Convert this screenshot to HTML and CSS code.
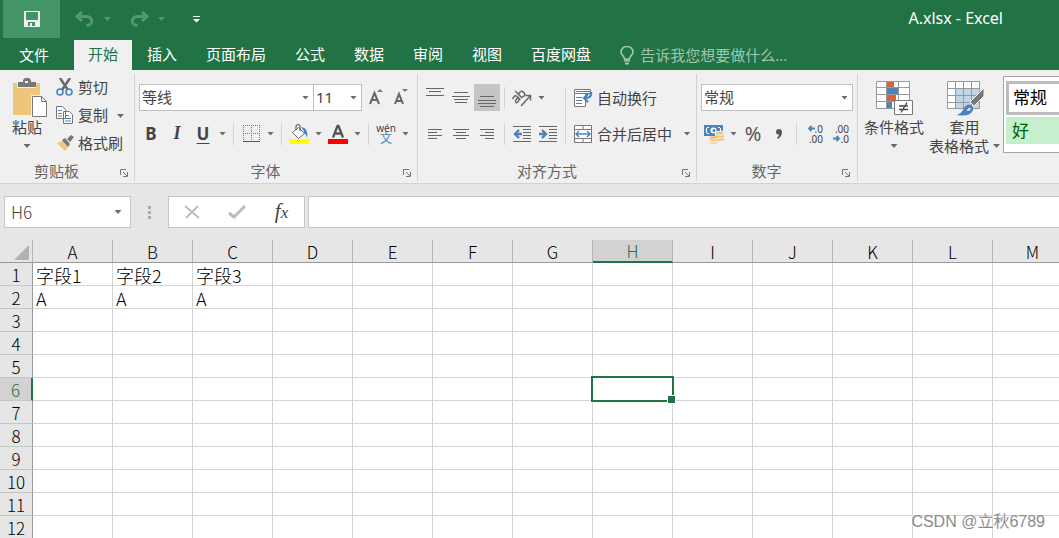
FILE: index.html
```html
<!DOCTYPE html>
<html lang="zh-CN">
<head>
<meta charset="utf-8">
<meta name="viewport" content="width=device-width, initial-scale=1">
<title>A.xlsx - Excel</title>
<link rel="stylesheet" href="styles.css">
</head>
<body>
<header class="titlebar">
  <div class="quick">
    <button class="save" aria-label="保存"><svg width="16" height="16" viewBox="0 0 16 16"><path fill="#f0f0f0" fill-rule="evenodd" d="M0 0h16v16H0zM2 1v8h12V1zM4 11v4h2v-3h2v3h3v-4z"/></svg></button>
    <button class="undo" aria-label="撤消"><svg width="20" height="16" viewBox="0 0 20 16"><path d="M7 1 2 5.500 7 10M2.500 5.500h9c7 0 7 9 0 9" fill="none" stroke="#559673" stroke-width="3"/></svg></button>
    <button class="drop faded" aria-label="撤消列表"><i class="arrow"></i></button>
    <button class="redo" aria-label="恢复"><svg width="20" height="16" viewBox="0 0 20 16"><path d="m13 1 5 4.500L13 10M17.500 5.500h-9c-7 0-7 9 0 9" fill="none" stroke="#559673" stroke-width="3"/></svg></button>
    <button class="drop faded" aria-label="恢复列表"><i class="arrow"></i></button>
    <button class="customize" aria-label="自定义快速访问工具栏"><svg width="7" height="7" viewBox="0 0 7 7"><path fill="#fff" d="M0 0h7v1H0zM0 3h7L3.500 6.500z"/></svg></button>
  </div>
  <h1 class="doc-title">A.xlsx - Excel</h1>
</header>
<nav class="tabs">
  <button class="tab file">文件</button>
  <button class="tab active">开始</button>
  <button class="tab">插入</button>
  <button class="tab">页面布局</button>
  <button class="tab">公式</button>
  <button class="tab">数据</button>
  <button class="tab">审阅</button>
  <button class="tab">视图</button>
  <button class="tab">百度网盘</button>
  <button class="tell"><svg width="14" height="19" viewBox="0 0 14 19"><path d="M4.500 13c0-3-3.500-4-3.500-7a6 5.500 0 0 1 12 0c0 3-3.500 4-3.500 7z" fill="none" stroke="#a0c6b0" stroke-width="1.600"/><path d="M4 14.500h6M5 17.500h4" stroke="#a0c6b0" stroke-width="2"/></svg><span>告诉我您想要做什么...</span></button>
</nav>

<main class="ribbon">
  <section class="group clipboard">
    <div class="body">
      <button class="big paste">
        <svg width="36" height="40" viewBox="0 0 36 40"><path fill="#edc57b" d="M1 5h27v32H1z"/><path fill="#f0f0f0" d="M5 4h19v6H5z"/><path fill="#777" fill-rule="evenodd" d="M6 4h5V2l2-2h4l2 2v2h5v5H6zM13 3v2h3V3z"/><path fill="#f0f0f0" d="M19 17h17v22H19z"/><path d="M20.500 18.500h9l5 5v15h-14zM29.500 18.500v5h5" fill="#fff" stroke="#777"/></svg>
        <span>粘贴</span><i class="arrow"></i>
      </button>
      <div class="stack">
        <button class="tool"><svg width="18" height="18" viewBox="0 0 18 18"><path d="m4 0 8 12M14 0 6 12" stroke="#6a6a6a" stroke-width="2.500"/><g fill="none" stroke="#4a83bd" stroke-width="1.600"><circle cx="4" cy="14" r="3"/><circle cx="13" cy="14" r="3"/></g></svg><span>剪切</span></button>
        <div class="split"><button class="tool"><svg width="18" height="18" viewBox="0 0 18 18"><path d="M.5.5h6l3 3v9h-9zM7.500 5.500h6l3 3v9h-9z" fill="#fff" stroke="#777"/><path d="M2 4.500h4M2 7.500h4M2 10h4M9 9.500h4M9 12.500h6M9 15h6" stroke="#4a83bd"/></svg><span>复制</span></button><button class="drop" aria-label="复制选项"><i class="arrow"></i></button></div>
        <button class="tool"><svg width="18" height="18" viewBox="0 0 18 18"><path fill="#edc57b" d="m1 9 6-2 5 6-3 4z"/><path fill="#777" d="m6 6 3-2 5 6-2 3zM11 5l4-4 3 2-4 5z"/></svg><span>格式刷</span></button>
      </div>
    </div>
    <div class="foot"><h2>剪贴板</h2><button class="launch" aria-label="剪贴板设置"><svg width="8" height="8" viewBox="0 0 8 8"><path d="M.5 6V.5H6M3 3l4 4M7.500 3v4.500H3" fill="none" stroke="#777"/></svg></button></div>
  </section>

  <section class="group font">
    <div class="body rows">
      <div class="row fields">
        <label class="combo grow"><select aria-label="字体"><option>等线</option></select><i class="arrow"></i></label><label class="combo size"><select aria-label="字号"><option>11</option></select><i class="arrow"></i></label>
        <button class="ic" aria-label="增大字号"><svg width="18" height="20" viewBox="0 0 18 20"><path d="M4 16 8.500 5 13 16M5.500 12h6" fill="none" stroke="#666" stroke-width="2"/><path fill="#4a83bd" d="M11 4h6l-3-3z"/></svg></button>
        <button class="ic" aria-label="减小字号"><svg width="18" height="20" viewBox="0 0 18 20"><path d="M3 16 7 6l4 10M4.500 13h5" fill="none" stroke="#666" stroke-width="2"/><path fill="#4a83bd" d="M10 1h6l-3 3z"/></svg></button>
      </div>
      <div class="row">
        <button class="ic bold">B</button><button class="ic italic">I</button><button class="ic under">U</button><button class="drop" aria-label="下划线选项"><i class="arrow"></i></button>
        <i class="sep"></i>
        <button class="ic" aria-label="边框"><svg width="17" height="17" viewBox="0 0 17 17"><path d="M0 .5h17M.5 0v16M16.500 0v16M8.500 0v16M0 8.500h17" stroke="#777" stroke-dasharray="1 1"/><path d="M0 16.500h17" stroke="#555"/></svg></button><button class="drop" aria-label="边框选项"><i class="arrow"></i></button>
        <i class="sep"></i>
        <button class="ic" aria-label="填充颜色"><svg width="20" height="20" viewBox="0 0 20 20"><path d="m3.500 8.500 6-5 6 6-6 5z" fill="#fff" stroke="#666"/><path d="M7 6V2q2-3 4 0v5" fill="none" stroke="#666" stroke-width="1.200"/><path fill="#4a83bd" d="M12 3q8 1 6 11-1-5-4-5l1-2z"/><path fill="#ff0" d="M0 15h20v5H0z"/></svg></button><button class="drop" aria-label="填充颜色选项"><i class="arrow"></i></button>
        <button class="ic" aria-label="字体颜色"><svg width="20" height="20" viewBox="0 0 20 20"><path d="M5 13.500 9.500 2h1L15 13.500M6.500 9.500h7" fill="none" stroke="#555" stroke-width="2.300"/><path fill="red" d="M0 15h20v5H0z"/></svg></button><button class="drop" aria-label="字体颜色选项"><i class="arrow"></i></button>
        <i class="sep"></i>
        <button class="ic pinyin"><span>wén</span><b>文</b></button><button class="drop" aria-label="拼音选项"><i class="arrow"></i></button>
      </div>
    </div>
    <div class="foot"><h2>字体</h2><button class="launch" aria-label="字体设置"><svg width="8" height="8" viewBox="0 0 8 8"><path d="M.5 6V.5H6M3 3l4 4M7.500 3v4.500H3" fill="none" stroke="#777"/></svg></button></div>
  </section>

  <section class="group align">
    <div class="body">
      <div class="rows">
        <div class="row">
          <button class="ic" aria-label="顶端对齐"><svg width="18" height="20" viewBox="0 0 18 20"><path d="M0 .5h18M3 3.500h12M0 7.500h18" stroke="#666"/></svg></button><button class="ic" aria-label="垂直居中"><svg width="18" height="20" viewBox="0 0 18 20"><path d="M2 4.500h14M0 8.500h18M2 11.500h14M3 14.500h12" stroke="#666"/></svg></button><button class="ic on" aria-label="底端对齐"><svg width="18" height="20" viewBox="0 0 18 20"><path d="M2 8.500h14M0 12.500h18M0 15.500h18M2 18.500h14" stroke="#666"/></svg></button>
          <i class="sep"></i>
          <button class="ic" aria-label="方向"><svg width="20" height="20" viewBox="0 0 20 20"><g fill="none" stroke="#666" stroke-width="1.500"><g transform="rotate(-45 7 9)"><path d="M1 6q5-2 5 1v5M6 8.500q-5 0-5 2 0 2.500 5 0M8.500 2v10M8.500 7q5-2.500 5 2t-5 2"/></g><path d="M9 18 18 8M13.500 7.500H18.500V12.500"/></g></svg></button><button class="drop" aria-label="方向选项"><i class="arrow"></i></button>
        </div>
        <div class="row">
          <button class="ic" aria-label="左对齐"><svg width="16" height="16" viewBox="0 0 16 16"><path d="M1 3.500h14M1 6.500h9M1 9.500h14M1 12.500h9" stroke="#666"/></svg></button><button class="ic" aria-label="居中"><svg width="16" height="16" viewBox="0 0 16 16"><path d="M0 3.500h16M3 6.500h10M0 9.500h16M3 12.500h10" stroke="#666"/></svg></button><button class="ic" aria-label="右对齐"><svg width="16" height="16" viewBox="0 0 16 16"><path d="M1 3.500h14M6 6.500h9M1 9.500h14M6 12.500h9" stroke="#666"/></svg></button>
          <i class="sep"></i>
          <button class="ic" aria-label="减少缩进"><svg width="18" height="18" viewBox="0 0 18 18"><path d="M0 1.500h18M10 4.500h8M10 7.500h8M10 10.500h8M10 13.500h8M0 16.500h18" stroke="#666"/><path d="M9 9H2M6 5 2 9l4 4" fill="none" stroke="#4a83bd" stroke-width="2.400"/></svg></button><button class="ic" aria-label="增加缩进"><svg width="18" height="18" viewBox="0 0 18 18"><path d="M0 1.500h18M10 4.500h8M10 7.500h8M10 10.500h8M10 13.500h8M0 16.500h18" stroke="#666"/><path d="M0 9h7M3 5l4 4-4 4" fill="none" stroke="#4a83bd" stroke-width="2.400"/></svg></button>
        </div>
      </div>
      <i class="sep tall"></i>
      <div class="rows">
        <button class="tool"><svg width="20" height="20" viewBox="0 0 20 20"><path d="M1.500 1.500h16v4h-16zM1.500 5.500h11v13h-11z" fill="#fff" stroke="#777"/><path d="M3 9.500h6M3 12.500h6M3 15.500h6M3 3.500h14" stroke="#4a83bd"/><path d="M18 4v2q0 4-6 4M15 6l-4 4 4 4" fill="none" stroke="#4a83bd" stroke-width="2.200"/></svg><span>自动换行</span></button>
        <div class="split"><button class="tool"><svg width="20" height="20" viewBox="0 0 20 20"><path d="M1.500 1.500h17v17h-17zM1 5.500h18M1 14.500h18M10 1v4M10 15v4" fill="#fff" stroke="#777"/><path d="M3 10h14M6 7l-3 3 3 3M14 7l3 3-3 3" fill="none" stroke="#4a83bd" stroke-width="1.400"/></svg><span>合并后居中</span></button><button class="drop wide" aria-label="合并选项"><i class="arrow"></i></button></div>
      </div>
    </div>
    <div class="foot"><h2>对齐方式</h2><button class="launch" aria-label="对齐设置"><svg width="8" height="8" viewBox="0 0 8 8"><path d="M.5 6V.5H6M3 3l4 4M7.500 3v4.500H3" fill="none" stroke="#777"/></svg></button></div>
  </section>

  <section class="group number">
    <div class="body rows">
      <div class="row"><label class="combo grow"><select aria-label="数字格式"><option>常规</option></select><i class="arrow"></i></label></div>
      <div class="row">
        <button class="ic" aria-label="会计数字格式"><svg width="20" height="20" viewBox="0 0 20 20"><path fill="#4a83bd" d="M0 1h19v11H0z"/><path d="M3 3.500h2M3 9.500h2M14 3.500h2M2.500 4v5M16.500 4v4" stroke="#fff" stroke-width="1.200"/><circle cx="9.500" cy="6.500" r="3" fill="#fff"/><circle cx="10" cy="6.500" r="1.500" fill="#4a83bd"/><path fill="#f0f0f0" d="M11 7h9v12H5v-6h6z"/><g fill="#edc57b"><ellipse cx="15.500" cy="9" rx="4" ry="1.500"/><path d="M12 11q4 1.500 8 0v2q-4 1.500-8 0zM14 15q3 0 6-1v2q-3 1-6 1z"/><ellipse cx="9.500" cy="13.500" rx="4" ry="1.500"/><path d="M6 15q4 1.500 7.500 0v1.500q-4 1.500-7.500 0zM6 18q4 1.500 7.500 0v1q-4 1.500-7.500 0z"/></g></svg></button><button class="drop" aria-label="会计格式选项"><i class="arrow"></i></button><button class="ic percent">%</button><button class="ic" aria-label="千位分隔样式"><svg width="8" height="12" viewBox="0 0 8 12"><path fill="#555" d="M1 4a3 3 0 1 1 6 0q0 4-4 7L2 10q2-2 2-3.500Q1 7 1 4z"/></svg></button>
        <i class="sep"></i>
        <button class="ic decimals" aria-label="增加小数位数"><span><svg width="8" height="7" viewBox="0 0 8 7"><path d="M8 3.500H2M4.500 1 2 3.500 4.500 6" fill="none" stroke="#4a83bd" stroke-width="1.800"/></svg>.0</span><span>.00</span></button><button class="ic decimals" aria-label="减少小数位数"><span>.00</span><span><svg width="8" height="7" viewBox="0 0 8 7"><path d="M0 3.500h6M3.500 1 6 3.500 3.500 6" fill="none" stroke="#4a83bd" stroke-width="1.800"/></svg>.0</span></button>
      </div>
    </div>
    <div class="foot"><h2>数字</h2><button class="launch" aria-label="数字设置"><svg width="8" height="8" viewBox="0 0 8 8"><path d="M.5 6V.5H6M3 3l4 4M7.500 3v4.500H3" fill="none" stroke="#777"/></svg></button></div>
  </section>

  <section class="group styles">
    <div class="body">
      <button class="big"><svg width="38" height="36" viewBox="0 0 38 36"><path fill="#fff" d="M1 1h33v27H1z"/><path fill="#d8623f" d="M12 1h7v6h-7zM12 15h9v6h-9z"/><path fill="#4a83bd" d="M12 8h11v6H12zM12 22h5v6h-5z"/><path d="M1.500 1.500h33v27h-33zM11.500 1v27M23.500 1v27M1 7.500h33M1 14.500h33M1 21.500h33" fill="none" stroke="#999"/><path d="M19.500 20.500h18v14h-18z" fill="#fff" stroke="#777"/><path d="M24 26h9M24 29.500h9M32 22.500l-6 10" stroke="#444" stroke-width="1.300"/></svg><span>条件格式</span><i class="arrow"></i></button>
      <button class="big table-style"><svg width="38" height="36" viewBox="0 0 38 36"><path fill="#fff" d="M1 1h32v27H1z"/><path fill="#c0d4ea" d="M9 8h24v20H9z"/><path d="M1.500 1.500h32v27h-32zM9.500 1v27M17.500 1v27M25.500 1v27M1 8.500h32M1 15.500h32M1 22.500h32" fill="none" stroke="#999"/><path d="M38 8v8L28 26l-4-4z" fill="#777" stroke="#f0f0f0"/><path fill="#4a83bd" d="M11 35q5-2 7-7 3-5 7-3 4 3 1 7-4 5-15 3z"/><path d="M21 31q0-3 4-3-1 3-4 3z" fill="#fff"/></svg><span>套用</span><span class="inline">表格格式<i class="arrow"></i></span></button>
      <div class="gallery"><button class="style chosen">常规</button><button class="style good">好</button></div>
    </div>
  </section>
</main>

<div class="formula">
  <div class="namebox"><input type="text" value="H6" aria-label="名称框"><button class="drop wide" aria-label="名称列表"><i class="arrow"></i></button></div>
  <svg class="grip" width="3" height="13" viewBox="0 0 3 13"><path fill="#aaa" d="M0 0h3v3H0zM0 5h3v3H0zM0 10h3v3H0z"/></svg>
  <div class="entry">
    <button aria-label="取消"><svg width="16" height="14" viewBox="0 0 16 14"><path d="m1 1 14 12M14 1 2 13" stroke="#bcbcbc" stroke-width="2"/></svg></button>
    <button aria-label="输入"><svg width="18" height="14" viewBox="0 0 18 14"><path d="m1 8 5 4L17 1" fill="none" stroke="#bcbcbc" stroke-width="3"/></svg></button>
    <button class="fx"><span>f</span><small>x</small></button>
  </div>
  <input class="value" type="text" aria-label="编辑栏">
</div>

<div class="sheet">
<table>
<thead><tr><th class="corner"><svg width="15" height="15" viewBox="0 0 15 15"><path fill="#b2b2b2" d="M15 0v15H0z"/></svg></th><th>A</th><th>B</th><th>C</th><th>D</th><th>E</th><th>F</th><th>G</th><th class="current">H</th><th>I</th><th>J</th><th>K</th><th>L</th><th>M</th></tr></thead>
<tbody>
<tr><th>1</th><td>字段1</td><td>字段2</td><td>字段3</td><td></td><td></td><td></td><td></td><td></td><td></td><td></td><td></td><td></td><td></td></tr>
<tr><th>2</th><td>A</td><td>A</td><td>A</td><td></td><td></td><td></td><td></td><td></td><td></td><td></td><td></td><td></td><td></td></tr>
<tr><th>3</th><td></td><td></td><td></td><td></td><td></td><td></td><td></td><td></td><td></td><td></td><td></td><td></td><td></td></tr>
<tr><th>4</th><td></td><td></td><td></td><td></td><td></td><td></td><td></td><td></td><td></td><td></td><td></td><td></td><td></td></tr>
<tr><th>5</th><td></td><td></td><td></td><td></td><td></td><td></td><td></td><td></td><td></td><td></td><td></td><td></td><td></td></tr>
<tr><th class="current">6</th><td></td><td></td><td></td><td></td><td></td><td></td><td></td><td class="selected"></td><td></td><td></td><td></td><td></td><td></td></tr>
<tr><th>7</th><td></td><td></td><td></td><td></td><td></td><td></td><td></td><td></td><td></td><td></td><td></td><td></td><td></td></tr>
<tr><th>8</th><td></td><td></td><td></td><td></td><td></td><td></td><td></td><td></td><td></td><td></td><td></td><td></td><td></td></tr>
<tr><th>9</th><td></td><td></td><td></td><td></td><td></td><td></td><td></td><td></td><td></td><td></td><td></td><td></td><td></td></tr>
<tr><th>10</th><td></td><td></td><td></td><td></td><td></td><td></td><td></td><td></td><td></td><td></td><td></td><td></td><td></td></tr>
<tr><th>11</th><td></td><td></td><td></td><td></td><td></td><td></td><td></td><td></td><td></td><td></td><td></td><td></td><td></td></tr>
<tr><th>12</th><td></td><td></td><td></td><td></td><td></td><td></td><td></td><td></td><td></td><td></td><td></td><td></td><td></td></tr>
</tbody>
</table>
<p class="watermark">CSDN @立秋6789</p>
</div>
</body>
</html>
```

FILE: styles.css
```css
* { box-sizing: border-box; }

body {
  margin: 0;
  height: 100vh;
  display: flex;
  flex-direction: column;
  overflow: hidden;
  background: #fff;
  color: #444;
  font: 15px/20px "Noto Sans", "Noto Sans CJK SC", sans-serif;
}

button, input, select {
  margin: 0;
  padding: 0;
  border: 0;
  border-radius: 0;
  background: none;
  color: inherit;
  font: inherit;
}

button {
  display: flex;
  align-items: center;
  justify-content: center;
  white-space: nowrap;
  flex: none;
}

svg { display: block; flex: none; }
h1, h2, p { margin: 0; font-size: 15px; font-weight: 400; }

.arrow {
  display: block;
  flex: none;
  width: 7px;
  height: 4px;
  background: #6a6a6a;
  clip-path: polygon(0 0, 100% 0, 50% 100%);
}

/* Title bar and tabs */
.titlebar {
  display: flex;
  justify-content: space-between;
  align-items: flex-start;
  height: 40px;
  flex: none;
  padding: 0 56px 0 3px;
  background: #217346;
  color: #fff;
}
.quick { display: flex; align-items: center; }
.save { width: 57px; height: 38px; background: #439467; }
.undo, .redo { width: 41px; padding-left: 8px; }
.undo, .redo, .quick .drop, .customize { height: 36px; }
.faded .arrow { background: #559673; }
.customize { width: 56px; }
.doc-title { font-size: 16px; line-height: 36px; }

.tabs {
  display: flex;
  gap: 1px;
  height: 30px;
  flex: none;
  background: #217346;
  color: #fff;
}
.tab { padding: 0 14px 3px; }
.file { width: 68px; margin-right: 5px; padding-bottom: 0; }
.active { background: #f0f0f0; color: #217346; }
.tell { gap: 6px; padding-left: 14px; color: #a0c6b0; }

/* Ribbon */
.ribbon {
  display: flex;
  flex: none;
  height: 114px;
  padding: 4px 0 2px;
  background: #f0f0f0;
  border-bottom: 1px solid #d2d2d2;
  overflow: hidden;
}
.group {
  display: flex;
  flex-direction: column;
  flex: none;
  padding: 0 3px;
  border-right: 1px solid #d2d2d2;
}
.clipboard { width: 135px; padding: 0 3px 0 0; }
.font { width: 283px; }
.align { width: 279px; padding-left: 4px; }
.number { width: 161px; padding: 0 4px; }
.styles { flex: 1; padding: 0; border: 0; }
.body { display: flex; flex: 1; }
.rows {
  display: flex;
  flex-direction: column;
  align-items: flex-start;
  gap: 9px;
  padding-top: 10px;
}
.row { display: flex; align-items: center; align-self: stretch; height: 27px; }
.fields { padding-left: 1px; }
.rows > .tool, .rows > .split { height: 27px; }

.foot { display: flex; align-items: center; height: 20px; flex: none; }
.foot h2 { flex: 1; padding-right: 7px; text-align: center; color: #666; }
.clipboard .foot h2 { padding-right: 4px; }
.launch { width: 14px; height: 16px; padding-top: 4px; }

.ic { width: 26px; height: 27px; }
.on { background: #c5c5c5; }
.drop { width: 13px; height: 27px; }
.wide { width: 24px; }
.sep { flex: none; width: 1px; height: 22px; margin: 0 4px; background: #d2d2d2; }
.tall { height: 56px; margin-top: 14px; }
.tool { gap: 4px; padding: 0 3px; height: 28px; }
.split { display: flex; align-items: center; }

.stack { display: flex; flex-direction: column; align-items: flex-start; }
.clipboard .body { gap: 2px; }
.clipboard .tool { gap: 4px; padding: 0 6px 2px 0; }

.big { flex-direction: column; justify-content: flex-start; padding-top: 6px; width: 72px; }
.big svg { margin-bottom: 1px; }
.big .arrow { margin-top: 7px; }
.big .inline { display: flex; gap: 4px; align-items: center; line-height: 18px; }
.big .inline .arrow { margin: 0; }
.table-style { width: 69px; }
.paste { width: 54px; padding-top: 4px; }
.paste svg { margin: 0 0 -1px 6px; }

.combo {
  display: flex;
  position: relative;
  align-items: center;
  height: 27px;
  border: 1px solid #c0c0c0;
  background: #fff;
}
.combo.grow { flex: 1; }
.combo.size { width: 48px; border-left: 0; }
.combo select { width: 100%; height: 25px; padding: 0 0 2px 2px; appearance: none; outline: 0; }
.combo .arrow { position: absolute; right: 4px; pointer-events: none; }

.bold { font: 700 17px "Noto Sans", sans-serif; }
.italic { font: italic 700 18px "Liberation Serif", serif; }
.under { font: 700 17px/18px "Noto Sans", sans-serif; text-decoration: underline; text-underline-offset: 3px; text-decoration-thickness: 1px; }
.pinyin { flex-direction: column; font-size: 10px; line-height: 10px; }
.pinyin b { color: #4a83bd; font-weight: 400; font-size: 12px; line-height: 12px; }
.percent { font-size: 20px; color: #555; }
.decimals { flex-direction: column; align-items: flex-end; padding-right: 4px; font: 10px/10px "Noto Sans", sans-serif; }
.decimals span { display: flex; align-items: center; }

.gallery {
  flex: 1;
  display: flex;
  flex-direction: column;
  gap: 2px;
  height: 77px;
  margin: 2px 0 0 4px;
  padding: 4px 0 0 2px;
  border: 1px solid #a6a6a6;
  border-right: 0;
  background: #fff;
  overflow: hidden;
}
.style { justify-content: flex-start; width: 96px; height: 27px; padding-left: 6px; font-size: 17px; }
.chosen { height: 34px; border: 3px solid #bdbdbd; color: #000; padding-left: 4px; }
.good { background: #c6efce; color: #006100; }

/* Formula bar */
.formula {
  display: flex;
  align-items: center;
  flex: none;
  height: 56px;
  padding: 0 0 0 4px;
  background: #e6e6e6;
}
.namebox, .entry, .value { height: 32px; border: 1px solid #c6c6c6; background: #fff; }
.namebox { display: flex; align-items: center; width: 127px; }
.namebox input { flex: 1; min-width: 0; padding-left: 6px; font-size: 17px; outline: 0; font-family: "Noto Sans CJK SC", sans-serif; font-weight: 300; }
.grip { margin: 0 17px; }
.entry { display: flex; width: 137px; margin-right: 3px; }
.entry button { flex: 1; }
.entry .fx { padding-bottom: 2px; }
.fx { font: italic 400 21px "Liberation Serif", serif; color: #444; }
.fx small { font-size: 17px; padding-top: 3px; }
.value { flex: 1; min-width: 0; border-right: 0; padding: 0 6px; outline: 0; }

/* Sheet */
.sheet { position: relative; flex: 1; min-height: 0; }
table {
  width: max-content;
  table-layout: fixed;
  border-collapse: separate;
  border-spacing: 0;
  color: #000;
  font: 300 18px/20px "Noto Sans CJK SC", sans-serif;
}
th, td { height: 23px; padding: 2px 0 0; border: 0 solid #d4d4d4; border-width: 0 1px 1px 0; }
td { width: 80px; padding-left: 3px; text-align: left; white-space: nowrap; }
th { font-weight: 300; font-size: 17px; background: #e6e6e6; border-color: #c6c6c6; text-align: center; }
thead th { width: 80px; border-color: #b4b4b4; border-bottom-color: #999; }
tbody th { border-right-color: #999; }
.corner { width: 33px; padding-left: 14px; }
.current { background: #d2d2d2; color: #217346; }
thead .current { border-bottom: 2px solid #217346; padding-top: 1px; }
tbody .current { border-right: 2px solid #217346; }
.selected { position: relative; }
.selected::before { content: ""; position: absolute; inset: -2px; border: 2px solid #217346; }
.selected::after {
  content: "";
  position: absolute;
  right: -4px;
  bottom: -4px;
  width: 7px;
  height: 7px;
  border: 1px solid #fff;
  background: #217346;
}
.watermark {
  position: absolute;
  right: 14px;
  bottom: 6px;
  color: #8c8c8c;
  font: 16px/20px "Liberation Sans", "Noto Sans CJK SC", sans-serif;
}
```
